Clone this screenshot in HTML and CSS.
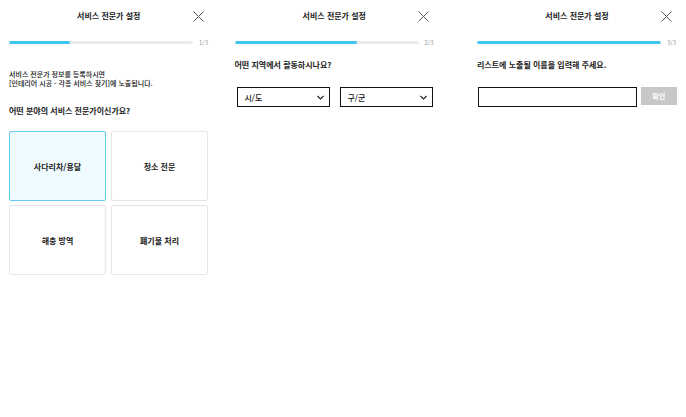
FILE: index.html
```html
<!DOCTYPE html>
<html lang="ko">
<head>
    <meta charset="UTF-8">
    <meta name="viewport" content="width=device-width, initial-scale=1.0">
    <title>서비스 전문가 설정</title>
    <link rel="stylesheet" href="styles.css">
</head>
<body>

<div class="steps">
    <!-- step 1 -->
    <div class="panel">
        <div class="header">
            <span></span>
            <h2>서비스 전문가 설정</h2>
            <button class="close-button" aria-label="닫기">
                <svg width="11" height="11" viewBox="0 0 11 11"><path d="M0.5 0.5L10.5 10.5M10.5 0.5L0.5 10.5" stroke="#555" stroke-width="1" fill="none"/></svg>
            </button>
        </div>
        <div class="progress">
            <div class="progress-track"><div class="progress-fill" style="width: 33.3%"></div></div>
            <span class="progress-label">1/3</span>
        </div>
        <p class="desc">서비스 전문가 정보를 등록하시면<br>[인테리어 시공 - 각종 서비스 찾기]에 노출됩니다.</p>
        <p class="question">어떤 분야의 서비스 전문가이신가요?</p>
        <div class="category-grid">
            <div class="category selected">사다리차/용달</div>
            <div class="category">청소 전문</div>
            <div class="category">해충 방역</div>
            <div class="category">폐기물 처리</div>
        </div>
    </div>

    <!-- step 2 -->
    <div class="panel panel-2">
        <div class="header">
            <span></span>
            <h2>서비스 전문가 설정</h2>
            <button class="close-button" aria-label="닫기">
                <svg width="11" height="11" viewBox="0 0 11 11"><path d="M0.5 0.5L10.5 10.5M10.5 0.5L0.5 10.5" stroke="#555" stroke-width="1" fill="none"/></svg>
            </button>
        </div>
        <div class="progress">
            <div class="progress-track"><div class="progress-fill" style="width: 66.6%"></div></div>
            <span class="progress-label">2/3</span>
        </div>
        <p class="question question-tight">어떤 지역에서 활동하시나요?</p>
        <div class="select-row">
            <div class="select-box">
                <span>시/도</span>
                <svg width="7" height="5" viewBox="0 0 7 5"><path d="M0.5 1L3.5 4L6.5 1" stroke="#222" stroke-width="1.1" fill="none"/></svg>
            </div>
            <div class="select-box">
                <span>구/군</span>
                <svg width="7" height="5" viewBox="0 0 7 5"><path d="M0.5 1L3.5 4L6.5 1" stroke="#222" stroke-width="1.1" fill="none"/></svg>
            </div>
        </div>
    </div>

    <!-- step 3 -->
    <div class="panel panel-3">
        <div class="header">
            <span></span>
            <h2>서비스 전문가 설정</h2>
            <button class="close-button" aria-label="닫기">
                <svg width="11" height="11" viewBox="0 0 11 11"><path d="M0.5 0.5L10.5 10.5M10.5 0.5L0.5 10.5" stroke="#555" stroke-width="1" fill="none"/></svg>
            </button>
        </div>
        <div class="progress">
            <div class="progress-track"><div class="progress-fill" style="width: 100%"></div></div>
            <span class="progress-label">3/3</span>
        </div>
        <p class="question question-tight">리스트에 노출될 이름을 입력해 주세요.</p>
        <div class="name-row">
            <input type="text" class="name-input">
            <button class="confirm-button">확인</button>
        </div>
    </div>
</div>

</body>
</html>
```

FILE: styles.css
```css
body {
    font-family: "Noto Sans CJK KR", "Noto Sans", sans-serif;
    background-color: #fff;
    margin: 0;
    color: #222;
}

.steps {
    display: flex;
    align-items: flex-start;
}

.panel {
    width: 200px;
    padding: 0 9px;
}

.panel-2 {
    margin-left: 8px;
}

.panel-3 {
    margin-left: 25px;
}

.header {
    display: grid;
    grid-template-columns: 1fr auto 1fr;
    align-items: center;
    height: 32px;
}

.header h2 {
    margin: 0;
    font-size: 8px;
    font-weight: 700;
    line-height: 10px;
    color: #222;
}

.close-button {
    justify-self: end;
    margin-right: 5px;
    padding: 0;
    border: none;
    background: none;
    width: 11px;
    height: 11px;
    display: flex;
}

.progress {
    display: flex;
    align-items: center;
    margin-top: 6px;
    height: 9px;
}

.progress-track {
    width: 184px;
    height: 3px;
    border-radius: 2px;
    background-color: #e9ecef;
    overflow: hidden;
}

.progress-fill {
    height: 100%;
    border-radius: 2px;
    background-color: #3ec5f1;
}

.progress-label {
    margin-left: 6px;
    font-size: 6px;
    line-height: 9px;
    color: #999;
}

.desc {
    margin: 23px 0 0;
    font-size: 7px;
    font-weight: 500;
    line-height: 9px;
    color: #111;
}

.question {
    margin: 18px 0 0;
    font-size: 8px;
    font-weight: 700;
    line-height: 10px;
    color: #222;
}

.question-tight {
    margin-top: 13px;
}

.category-grid {
    display: grid;
    grid-template-columns: 97px 97px;
    grid-auto-rows: 70px;
    gap: 4px 5px;
    margin-top: 15px;
}

.category {
    display: flex;
    align-items: center;
    justify-content: center;
    box-sizing: border-box;
    border: 1px solid #e6e6e6;
    border-radius: 2px;
    font-size: 8px;
    font-weight: 700;
    color: #222;
}

.category.selected {
    border-color: #5fcdf2;
    background-color: #effbff;
}

.select-row {
    display: flex;
    gap: 10px;
    margin-top: 17px;
    padding-left: 2px;
}

.select-box {
    display: flex;
    align-items: center;
    justify-content: space-between;
    box-sizing: border-box;
    width: 93px;
    height: 20px;
    padding: 0 5px 0 7px;
    border: 1px solid #111;
    font-size: 8px;
    font-weight: 500;
    color: #111;
}

.name-row {
    display: flex;
    align-items: flex-start;
    gap: 4px;
    margin-top: 17px;
    padding-left: 1px;
}

.name-input {
    box-sizing: border-box;
    width: 161px;
    height: 20px;
    margin: 0;
    border: 1px solid #111;
    border-radius: 0;
    padding: 0 4px;
    font-size: 8px;
}

.confirm-button {
    width: 37px;
    height: 18px;
    padding: 0;
    border: none;
    background-color: #c8c8c8;
    color: #fff;
    font-family: inherit;
    font-size: 7px;
    font-weight: 700;
}
```
